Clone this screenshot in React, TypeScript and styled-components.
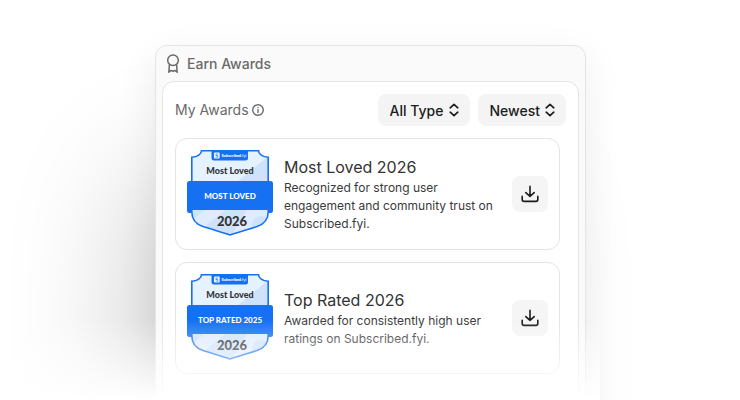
import React from "react";
import styled, { createGlobalStyle } from "styled-components";

const GlobalStyle = createGlobalStyle`
  *, *::before, *::after { box-sizing: border-box; }
  body {
    margin: 0;
    background: #fff;
    color: #3a3a3a;
    font-family: Inter, "Liberation Sans", sans-serif;
  }
  h1, h2, h3, p, ul { margin: 0; padding: 0; }
  button, select { font: inherit; color: inherit; border: 0; }
`;

const Page = styled.main`
  position: relative;
  height: 100vh;
  overflow: hidden;
  padding: 45px 154px 0 155px;
`;

const Panel = styled.section`
  min-height: 100vh;
  padding: 0 6px;
  border: 1px solid #e4e4e4;
  border-radius: 12px;
  background: #fafafa;
  box-shadow:
    0 12px 40px rgba(0, 0, 0, 0.07),
    -50px 100px 120px -30px rgba(0, 0, 0, 0.2);
`;

const PanelTitle = styled.h1`
  display: flex;
  align-items: center;
  gap: 7px;
  height: 35px;
  padding-left: 4px;
  color: #6a6a6a;
  font-size: 14px;
  line-height: 20px;
  font-weight: 450;
`;

const Body = styled.div`
  min-height: 100vh;
  padding: 12px;
  border: 1px solid #e4e4e4;
  border-radius: 12px;
  background: #fff;
`;

const Toolbar = styled.div`
  display: flex;
  align-items: center;
  gap: 8px;
  margin-bottom: 12px;
`;

const Heading = styled.h2`
  display: flex;
  align-items: center;
  gap: 2px;
  margin-right: auto;
  color: #6a6a6a;
  font-size: 14px;
  line-height: 20px;
  font-weight: 400;
`;

const Filter = styled.label`
  display: flex;
  align-items: center;
  gap: 4px;
  height: 32px;
  padding: 0 10px 0 12px;
  border-radius: 8px;
  background: #f4f4f4;
  color: #1c1c1c;
  font-size: 14px;
  font-weight: 500;
`;

const Select = styled.select`
  appearance: none;
  field-sizing: content;
  padding: 0;
  background: transparent;
`;

const List = styled.ul`
  display: grid;
  gap: 12px;
  margin-right: 6px;
  list-style: none;
`;

const Card = styled.li`
  display: flex;
  align-items: center;
  gap: 11px;
  min-height: 112px;
  padding: 10px 11px;
  border: 1px solid #e4e4e4;
  border-radius: 12px;
`;

const Copy = styled.div`
  flex: 1;
`;

const CardTitle = styled.h3`
  color: #333;
  font-size: 16px;
  line-height: 24px;
  font-weight: 400;
`;

const CardText = styled.p`
  font-size: 12px;
  line-height: 18px;
`;

const IconButton = styled.button`
  display: grid;
  place-items: center;
  flex: none;
  width: 36px;
  height: 36px;
  padding: 0;
  border-radius: 8px;
  background: #f5f5f5;
  color: #1c1c1c;
`;

const Fade = styled.div`
  position: absolute;
  inset: auto 140px 0 0;
  height: 80px;
  background: linear-gradient(rgba(255, 255, 255, 0), #fff);
  pointer-events: none;
`;

const BadgeArt = styled.svg`
  flex: none;
  width: 86px;
  height: 88px;
  font-family: Lato, sans-serif;
  font-weight: 900;
  text-anchor: middle;
`;

const SHIELD =
  "M14.5 0.8H71.5C71.5 4 75.5 7.2 81.2 7.2V62C81.2 70 76 74.5 70 76.6C61 79.5 52 82 43 85C34 82 25 79.5 16 76.6C10 74.5 4.8 70 4.8 62V7.2C10.5 7.2 14.5 4 14.5 0.8Z";

function Badge({ id, label }: { id: string; label: string }) {
  return (
    <BadgeArt viewBox="0 0 86 88" role="img" aria-label={label}>
      <clipPath id={id}>
        <path d={SHIELD} />
      </clipPath>
      <path d={SHIELD} fill="#e5f2ff" />
      <g clipPath={`url(#${id})`}>
        <path d="M79 8L50 32H86V8Z" fill="#cfe2fc" />
        <path d="M0 60H86V88H0Z" fill="#dfecff" />
        <path d="M4 60H17L4 72Z" fill="#cfe2fc" />
        <path d="M38 60L14 80L43 88L60 60Z" fill="#cfe2fc" />
        <circle cx="74" cy="75" r="9" fill="#cfe2fc" />
      </g>
      <path d={SHIELD} fill="none" stroke="#1671f2" strokeWidth="1.6" />
      <path d="M24.5 0.2H61V8Q61 10.5 58.5 10.5H27Q24.5 10.5 24.5 8Z" fill="#1671f2" />
      <rect x="27" y="2.5" width="5.6" height="6" rx="1" fill="#fff" />
      <path d="M31.1 4H28.9V5.5H30.9V7.2H28.5" fill="none" stroke="#1671f2" strokeWidth="0.7" />
      <text x="47" y="7" fontSize="4" fill="#fff">
        Subscribed<tspan fontWeight="400">.fyi</tspan>
      </text>
      <text x="43" y="24" fontSize="9" fill="#333">Most Loved</text>
      <path d="M2.5 31H83.5Q86 31 86 33.5V60.5Q86 63 83.5 63H81.5V60H4.5V63H2.5Q0 63 0 60.5V33.5Q0 31 2.5 31Z" fill="#1671f2" />
      <text x="43" y="49" fontSize="8" fill="#fff">{label}</text>
      <text x="45" y="76" fontSize="13" fill="#333">2026</text>
    </BadgeArt>
  );
}

function AwardIcon() {
  return (
    <svg width="14" height="20" viewBox="0 0 14 20" fill="none" stroke="currentColor" strokeWidth="1.5" strokeLinecap="round" strokeLinejoin="round" aria-hidden="true">
      <circle cx="7" cy="6.2" r="5.3" />
      <path d="M3.4 10.8L2.8 18.2L5.2 16.4L7 17.4L8.8 16.4L11.2 18.2L10.6 10.8" />
    </svg>
  );
}

function InfoIcon() {
  return (
    <svg width="14" height="14" viewBox="0 0 14 14" fill="none" stroke="currentColor" strokeWidth="1.4" strokeLinecap="round" aria-hidden="true">
      <circle cx="7" cy="7" r="5.3" />
      <path d="M7 6.8V9.6M7 4.6V4.7" />
    </svg>
  );
}

function SortIcon() {
  return (
    <svg width="12" height="16" viewBox="0 0 12 16" fill="none" stroke="currentColor" strokeWidth="1.7" strokeLinecap="round" strokeLinejoin="round" aria-hidden="true">
      <path d="M2.2 5.8L6 2.4L9.8 5.8M2.2 10.2L6 13.6L9.8 10.2" />
    </svg>
  );
}

function DownloadIcon() {
  return (
    <svg width="20" height="20" viewBox="0 0 20 20" fill="none" stroke="currentColor" strokeWidth="1.6" strokeLinecap="round" strokeLinejoin="round" aria-hidden="true">
      <path d="M10 2.4V12.4M5.8 8.6L10 12.4L14.2 8.6M2.2 12.4V15.6Q2.2 17.4 4 17.4H16Q17.8 17.4 17.8 15.6V12.4" />
    </svg>
  );
}

const AWARDS = [
  {
    id: "loved",
    label: "MOST LOVED",
    title: "Most Loved 2026",
    text: "Recognized for strong user engagement and community trust on Subscribed.fyi.",
  },
  {
    id: "rated",
    label: "TOP RATED 2025",
    title: "Top Rated 2026",
    text: "Awarded for consistently high user ratings on Subscribed.fyi.",
  },
];

export default function App() {
  return (
    <Page>
      <GlobalStyle />
      <Panel>
        <PanelTitle>
          <AwardIcon />
          Earn Awards
        </PanelTitle>
        <Body>
          <Toolbar>
            <Heading>
              My Awards
              <InfoIcon />
            </Heading>
            <Filter>
              <Select aria-label="Award type">
                <option>All Type</option>
              </Select>
              <SortIcon />
            </Filter>
            <Filter>
              <Select aria-label="Sort order">
                <option>Newest</option>
              </Select>
              <SortIcon />
            </Filter>
          </Toolbar>
          <List>
            {AWARDS.map((award) => (
              <Card key={award.id}>
                <Badge id={award.id} label={award.label} />
                <Copy>
                  <CardTitle>{award.title}</CardTitle>
                  <CardText>{award.text}</CardText>
                </Copy>
                <IconButton type="button" aria-label={`Download ${award.title}`}>
                  <DownloadIcon />
                </IconButton>
              </Card>
            ))}
          </List>
        </Body>
      </Panel>
      <Fade />
    </Page>
  );
}
